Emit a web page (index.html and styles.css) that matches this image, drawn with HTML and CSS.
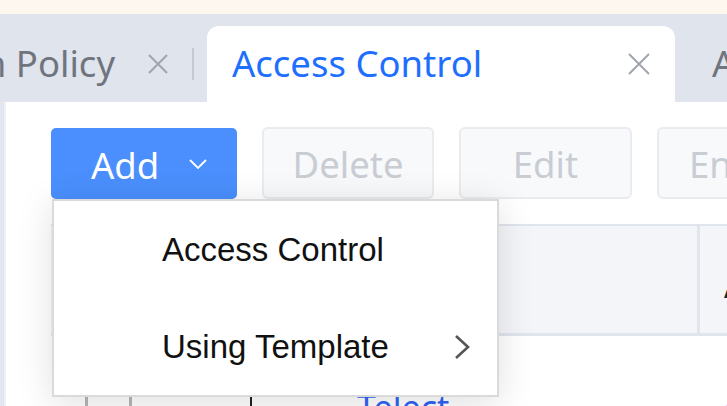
FILE: index.html
```html
<!DOCTYPE html>
<html lang="en">
<head>
<meta charset="utf-8">
<title>Access Control</title>
<link rel="stylesheet" href="styles.css">
</head>
<body>
<div class="top-strip"></div>
<div class="tabs">
  <div class="tab tab-prev">
    <span class="tab-label">Application Policy</span>
    <svg class="tab-close" width="20" height="20" viewBox="0 0 20 20"><path d="M1 1L19 19M19 1L1 19" stroke="#a1a5ac" stroke-width="2" fill="none"/></svg>
  </div>
  <span class="tab-sep"></span>
  <div class="tab tab-active">
    <span class="tab-label">Access Control</span>
    <svg class="tab-close" width="22" height="22" viewBox="0 0 22 22"><path d="M1 1L21 21M21 1L1 21" stroke="#a1a5ac" stroke-width="2" fill="none"/></svg>
  </div>
  <div class="tab tab-next">
    <span class="tab-label">Alarm Settings</span>
  </div>
</div>
<div class="main">
  <div class="side"></div>
  <div class="content">
    <div class="toolbar">
      <div class="add-wrap">
        <button class="btn btn-primary">Add
          <svg class="chev-down" width="18" height="10" viewBox="0 0 18 10"><path d="M1 1L9 9L17 1" stroke="#ffffff" stroke-width="1.8" fill="none"/></svg>
        </button>
        <div class="dropdown">
          <div class="dd-item">Access Control</div>
          <div class="dd-item">Using Template
            <svg class="chev-right" width="16" height="26" viewBox="0 0 16 26"><path d="M2 2L14 13L2 24" stroke="#555555" stroke-width="2.6" fill="none"/></svg>
          </div>
        </div>
      </div>
      <button class="btn btn-disabled btn-delete">Delete</button>
      <button class="btn btn-disabled btn-edit">Edit</button>
      <button class="btn btn-disabled btn-enable">Enable</button>
    </div>
    <div class="table">
      <div class="thead">
        <div class="th th-main"></div>
        <div class="th th-action">Action</div>
      </div>
      <div class="row">
        <span class="checkbox"></span>
        <span class="cursor"></span>
        <span class="link">Telect</span>
        <span class="link link-right">Allow</span>
      </div>
    </div>
  </div>
</div>
</body>
</html>
```

FILE: styles.css
```css
* { box-sizing: border-box; }
html, body {
  margin: 0;
  padding: 0;
  width: 727px;
  height: 406px;
  overflow: hidden;
  background: #ffffff;
  font-family: "Noto Sans", "Liberation Sans", sans-serif;
}

.top-strip {
  height: 14px;
  background: #fef7ef;
}

.tabs {
  height: 88px;
  background: #dfe4ed;
  display: flex;
  align-items: flex-end;
  white-space: nowrap;
  overflow: hidden;
}

.tab {
  height: 76px;
  display: flex;
  align-items: center;
  font-size: 36.5px;
  flex-shrink: 0;
}

.tab-label { line-height: 1; padding-bottom: 2px; flex-shrink: 0; }
.tab-close { flex-shrink: 0; }

.tab-prev {
  width: 192px;
  justify-content: flex-end;
  overflow: hidden;
  padding-right: 24px;
  color: #6f747d;
  gap: 33px;
}

.tab-sep {
  width: 2px;
  height: 32px;
  background: #c5c9d1;
  margin: 0 13px 22px 0;
  flex-shrink: 0;
}

.tab-active {
  width: 468px;
  background: #ffffff;
  border-radius: 12px 12px 0 0;
  padding: 0 25px;
  justify-content: space-between;
  color: #1f6ffe;
}

.tab-next {
  margin-left: 37px;
  color: #6f747d;
}

.main {
  display: flex;
  height: 304px;
}

.side {
  width: 6px;
  flex-shrink: 0;
  background: #e2e6ee;
  border-right: 2px solid #eef0f5;
}

.content {
  flex: 1;
  padding: 25px 0 0 45px;
  min-width: 0;
}

.toolbar {
  display: flex;
  align-items: flex-end;
  gap: 25px;
  white-space: nowrap;
}

.btn {
  font-family: "Noto Sans", "Liberation Sans", sans-serif;
  font-size: 36.5px;
  line-height: 1;
  flex-shrink: 0;
  border-radius: 6px;
  display: flex;
  align-items: center;
  justify-content: center;
  padding: 3px 0 0 0;
}

.add-wrap { position: relative; flex-shrink: 0; }

.btn-primary {
  width: 186px;
  height: 71px;
  background: #4a8ffd;
  border: none;
  color: #ffffff;
  border-radius: 5px;
  justify-content: flex-start;
  padding-left: 40px;
  gap: 30px;
}

.chev-down { margin-top: -2px; flex-shrink: 0; }

.btn-disabled {
  height: 72px;
  background: #f8f9fb;
  border: 2px solid #e9ebef;
  color: #c8ccd3;
}

.btn-delete { width: 172px; }
.btn-edit { width: 173px; }
.btn-enable { width: 173px; justify-content: flex-start; padding-left: 30px; }

.dropdown {
  position: absolute;
  top: 71px;
  left: 1px;
  width: 447px;
  height: 198px;
  background: #ffffff;
  border: 2px solid #dadada;
  box-shadow: 0 6px 34px rgba(0, 0, 0, 0.13);
  z-index: 10;
  font-family: "Liberation Sans", Arial, sans-serif;
  font-size: 33px;
  color: #111111;
}

.dd-item {
  height: 97px;
  display: flex;
  align-items: center;
  justify-content: space-between;
  padding: 0 27px 0 108px;
}

.chev-right { flex-shrink: 0; }

.table {
  margin-top: 25px;
  width: 676px;
}

.thead {
  display: flex;
  height: 112px;
  background: #f3f5f9;
  border-top: 2px solid #dfe4ed;
  border-bottom: 3px solid #dfe4ed;
}

.th-main {
  width: 649px;
  flex-shrink: 0;
  border-right: 3px solid #dfe4ed;
}

.th-action {
  flex: 1;
  min-width: 0;
  overflow: hidden;
  padding: 38px 0 0 24px;
  font-size: 32px;
  color: #222222;
  white-space: nowrap;
}

.row {
  display: flex;
  align-items: flex-start;
  height: 80px;
  padding-top: 44px;
  white-space: nowrap;
  overflow: hidden;
}

.checkbox {
  width: 47px;
  height: 47px;
  border: 3px solid #b4b6ba;
  border-radius: 4px;
  margin-left: 34px;
  flex-shrink: 0;
}

.cursor {
  width: 2px;
  height: 30px;
  background: #222222;
  margin: 14px 0 0 118px;
  flex-shrink: 0;
}

.link {
  font-size: 34px;
  color: #2f63f6;
  line-height: 1;
  margin: 10px 0 0 105px;
  flex-shrink: 0;
}

.link-right {
  margin-left: 272px;
}
```
